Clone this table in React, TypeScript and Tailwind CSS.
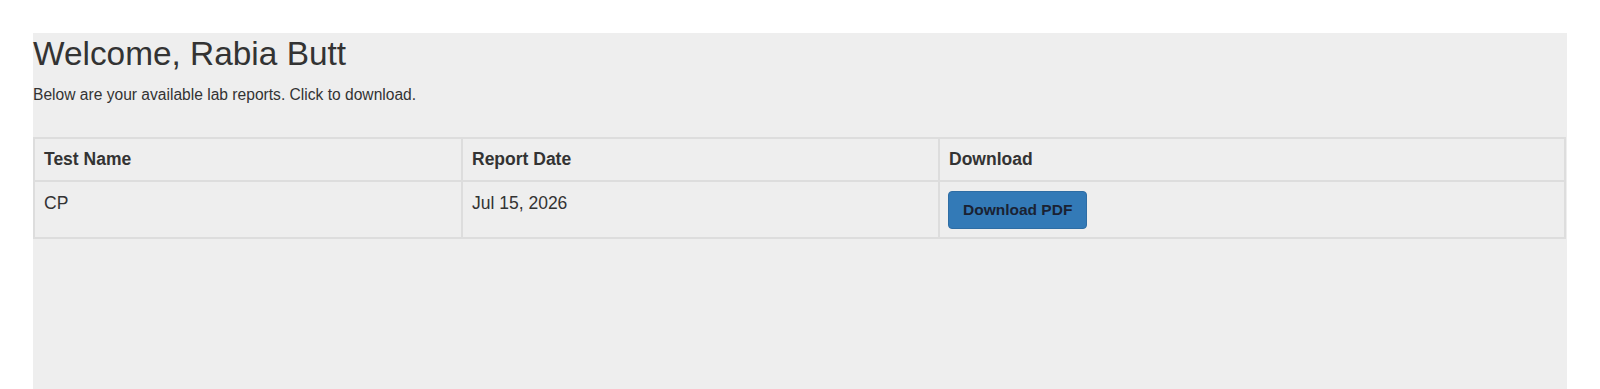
import React from 'react';

const reports = [{ id: 1, testName: 'CP', reportDate: 'Jul 15, 2026' }];

export default function App() {
  return (
    <div className="bg-white px-[33px] pt-[33px] text-[#333]" style={{ fontFamily: '"Liberation Sans", Arial, sans-serif' }}>
      <div className="h-[360px] bg-[#eeeeee] pt-[3px]">
        <h1 className="text-[33.4px] leading-[36px] font-normal">Welcome, Rabia Butt</h1>
        <p className="mt-[12px] text-[15.6px] leading-[22px]">Below are your available lab reports. Click to download.</p>

        <table className="mt-[31px] w-[1533px] table-fixed border-collapse text-[17.5px] leading-[25px]">
          <colgroup>
            <col className="w-[428px]" />
            <col className="w-[477px]" />
            <col />
          </colgroup>
          <thead>
            <tr>
              <th className="border-2 border-[#dddddd] px-[9px] pt-[8px] pb-[8px] text-left font-bold">Test Name</th>
              <th className="border-2 border-[#dddddd] px-[9px] pt-[8px] pb-[8px] text-left font-bold">Report Date</th>
              <th className="border-2 border-[#dddddd] px-[9px] pt-[8px] pb-[8px] text-left font-bold">Download</th>
            </tr>
          </thead>
          <tbody>
            {reports.map(r => (
              <tr key={r.id}>
                <td className="border-2 border-[#dddddd] px-[9px] pt-[9px] pb-[8px] align-top">{r.testName}</td>
                <td className="border-2 border-[#dddddd] px-[9px] pt-[9px] pb-[8px] align-top">{r.reportDate}</td>
                <td className="border-2 border-[#dddddd] pl-[8px] pr-[9px] pt-[9px] pb-[8px] align-top">
                  <button className="h-[38px] rounded-[4px] border border-[#2e6da4] bg-[#337ab7] px-[14px] text-[15.5px] font-bold leading-[22px] text-[#1a2233]">
                    Download PDF
                  </button>
                </td>
              </tr>
            ))}
          </tbody>
        </table>
      </div>
    </div>
  );
}
